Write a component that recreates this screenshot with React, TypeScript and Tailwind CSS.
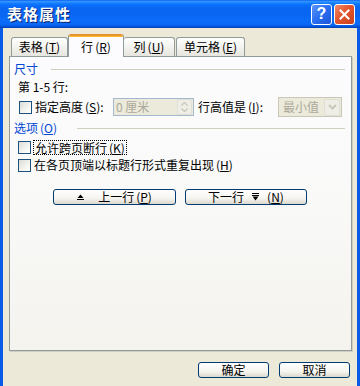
import React from 'react';

const FONT = "font-['SimSun','Noto_Sans_CJK_SC',sans-serif]";

function Key({ k }: { k: string }) {
  return (
    <span className="ml-[2px]">
      (<span className="underline underline-offset-1">{k}</span>)
    </span>
  );
}

function CheckBox() {
  return (
    <span className="inline-block w-[13px] h-[13px] shrink-0 border border-[#1c5180] bg-[linear-gradient(135deg,#dcdcd7_0%,#f4f4f0_60%,#ffffff_100%)]" />
  );
}

function SectionTitle({ children, gap }: { children: React.ReactNode; gap: string }) {
  return (
    <div className="flex items-center h-[14px] pl-[4px] pr-[6px]">
      <span className="text-[#0046d5] whitespace-nowrap leading-[14px]">{children}</span>
      <span className={`flex-1 h-px bg-[#d0d0bf] ${gap}`} />
    </div>
  );
}

function XpButton({ children, w }: { children: React.ReactNode; w: string }) {
  return (
    <div
      className={`${w} h-[16px] flex items-center justify-center rounded-[3px] border border-[#003c74] bg-[linear-gradient(to_bottom,#ffffff_0%,#f5f4ef_60%,#dcd8cc_100%)] leading-[14px] text-black`}
    >
      {children}
    </div>
  );
}

function UpIcon() {
  return (
    <svg width="7" height="7" viewBox="0 0 7 7" className="shrink-0">
      <path d="M3.5 0.5 L6.5 4 L0.5 4 Z" fill="#000" />
      <rect x="0" y="5" width="7" height="1" fill="#000" />
    </svg>
  );
}

function DownIcon() {
  return (
    <svg width="7" height="8" viewBox="0 0 7 8" className="shrink-0">
      <rect x="0" y="0" width="7" height="1" fill="#000" />
      <rect x="0" y="2" width="7" height="1" fill="#000" />
      <path d="M0.5 3.5 L6.5 3.5 L3.5 7.5 Z" fill="#000" />
    </svg>
  );
}

export default function App() {
  return (
    <div className={`w-[360px] h-[386px] overflow-hidden bg-[#ece9d8] flex flex-col text-[12px] text-black ${FONT}`}>
      {/* title bar */}
      <div className="h-[28px] shrink-0 flex items-center pl-[7px] pr-[5px] bg-[linear-gradient(to_bottom,#0058ee_0%,#3593ff_4%,#288eff_8%,#127dff_12%,#0a6ffc_18%,#0866f2_30%,#0a66f4_56%,#0b6cf8_70%,#0a6af8_86%,#0456e0_94%,#003dae_100%)]">
        <span className="text-white font-bold text-[15px] tracking-[1px] [text-shadow:1px_1px_0_#0a1f6b]">表格属性</span>
        <div className="flex-1" />
        <div className="w-[21px] h-[21px] rounded-[3px] border border-white bg-[linear-gradient(135deg,#5d95fb_0%,#2a6df0_50%,#1b56d8_100%)] flex items-center justify-center">
          <span className="text-white font-bold text-[16px] leading-none font-['Liberation_Sans',sans-serif]">?</span>
        </div>
        <div className="w-[21px] h-[21px] ml-[2px] rounded-[3px] border border-white bg-[linear-gradient(135deg,#f28a6a_0%,#e2562f_45%,#c8401c_100%)] flex items-center justify-center">
          <svg width="11" height="11" viewBox="0 0 11 11">
            <path d="M1.5 1.5 L9.5 9.5 M9.5 1.5 L1.5 9.5" stroke="#fff" strokeWidth="2" strokeLinecap="square" />
          </svg>
        </div>
      </div>

      {/* body */}
      <div className="flex-1 flex flex-col border-l-[3px] border-r-[3px] border-[#0a5ae8] pl-[6px] pr-[5px]">
        {/* tabs */}
        <div className="h-[22px] mt-[6px] flex items-end pl-[2px]">
          <div className="w-[57px] h-[19px] flex items-center justify-center border border-b-0 border-[#919b9c] rounded-t-[3px] bg-[linear-gradient(to_bottom,#ffffff_0%,#f3f3ef_50%,#e6e5df_100%)]">
            表格<Key k="T" />
          </div>
          <div className="relative z-10 -mb-px w-[56px] h-[23px] flex flex-col border-x border-[#919b9c] rounded-t-[3px] bg-[#fcfcfe] overflow-hidden">
            <div className="h-[3px] bg-[linear-gradient(to_bottom,#e68b2c_0%,#ffc73c_100%)] border-t border-[#e68b2c]" />
            <div className="flex-1 flex items-center justify-center">
              行<Key k="R" />
            </div>
          </div>
          <div className="w-[51px] h-[19px] flex items-center justify-center border border-b-0 border-l-0 border-[#919b9c] rounded-t-[3px] bg-[linear-gradient(to_bottom,#ffffff_0%,#f3f3ef_50%,#e6e5df_100%)]">
            列<Key k="U" />
          </div>
          <div className="w-[69px] ml-[1px] h-[19px] flex items-center justify-center border border-b-0 border-[#919b9c] rounded-t-[3px] bg-[linear-gradient(to_bottom,#ffffff_0%,#f3f3ef_50%,#e6e5df_100%)]">
            单元格<Key k="E" />
          </div>
        </div>

        {/* panel */}
        <div className="h-[295px] flex flex-col border border-[#919b9c] shadow-[1px_1px_0_#d0cec1] bg-[linear-gradient(to_bottom,#fcfcfe_0%,#f9f9f8_50%,#f4f3ee_100%)] pt-[5px]">
          <SectionTitle gap="ml-[13px]">尺寸</SectionTitle>

          <div className="h-[14px] mt-[4px] pl-[8px] leading-[14px] flex items-center whitespace-pre">第 1-5 行:</div>

          <div className="h-[20px] mt-[3px] flex items-center pl-[9px] pr-[6px]">
            <CheckBox />
            <span className="ml-[3px] w-[78px] whitespace-nowrap">
              指定高度<Key k="S" />:
            </span>
            <div className="w-[81px] h-[18px] flex items-center border border-[#a4b9cf] bg-[#ebeadb]">
              <span className="flex-1 pl-[2px] text-[#aca899]">0 厘米</span>
              <div className="w-[15px] h-[16px] mr-px flex flex-col items-center justify-center gap-[2px] rounded-[2px] bg-[#efeee6] border border-[#e0dfd6]">
                <svg width="7" height="4" viewBox="0 0 7 4"><path d="M0.5 3.5 L3.5 0.5 L6.5 3.5" fill="none" stroke="#c9c7ba" strokeWidth="1.3" /></svg>
                <svg width="7" height="4" viewBox="0 0 7 4"><path d="M0.5 0.5 L3.5 3.5 L6.5 0.5" fill="none" stroke="#c9c7ba" strokeWidth="1.3" /></svg>
              </div>
            </div>
            <span className="ml-[4px] w-[80px] whitespace-nowrap">
              行高值是<Key k="I" />:
            </span>
            <div className="w-[64px] h-[20px] flex items-center border border-[#cbc7b8] bg-[#ebeadb]">
              <span className="flex-1 pl-[4px] text-[#aca899]">最小值</span>
              <div className="w-[16px] h-[17px] mr-px flex items-center justify-center rounded-[2px] bg-[#efeee6] border border-[#e0dfd6]">
                <svg width="9" height="6" viewBox="0 0 9 6"><path d="M1 1 L4.5 4.5 L8 1" fill="none" stroke="#c9c7ba" strokeWidth="2" /></svg>
              </div>
            </div>
          </div>

          <div className="mt-[4px]">
            <SectionTitle gap="ml-[20px]">
              选项<Key k="O" />
            </SectionTitle>
          </div>

          <div className="h-[16px] mt-[4px] flex items-center pl-[8px]">
            <CheckBox />
            <span className="ml-[2px] px-px border border-dotted border-black leading-[13px]">
              允许跨页断行<Key k="K" />
            </span>
          </div>

          <div className="h-[16px] mt-[2px] flex items-center pl-[8px]">
            <CheckBox />
            <span className="ml-[3px] leading-[14px]">
              在各页顶端以标题行形式重复出现<Key k="H" />
            </span>
          </div>

          <div className="mt-[16px] flex pl-[43px] gap-[9px]">
            <XpButton w="w-[123px]">
              <UpIcon />
              <span className="ml-[14px]">上一行<Key k="P" /></span>
            </XpButton>
            <XpButton w="w-[122px]">
              <span className="mr-[8px]">下一行</span>
              <DownIcon />
              <span className="ml-[6px]"><Key k="N" /></span>
            </XpButton>
          </div>
        </div>

        {/* dialog buttons */}
        <div className="mt-[11px] flex justify-end gap-[10px] pr-[2px]">
          <XpButton w="w-[71px]">确定</XpButton>
          <XpButton w="w-[71px]">取消</XpButton>
        </div>
      </div>
    </div>
  );
}
